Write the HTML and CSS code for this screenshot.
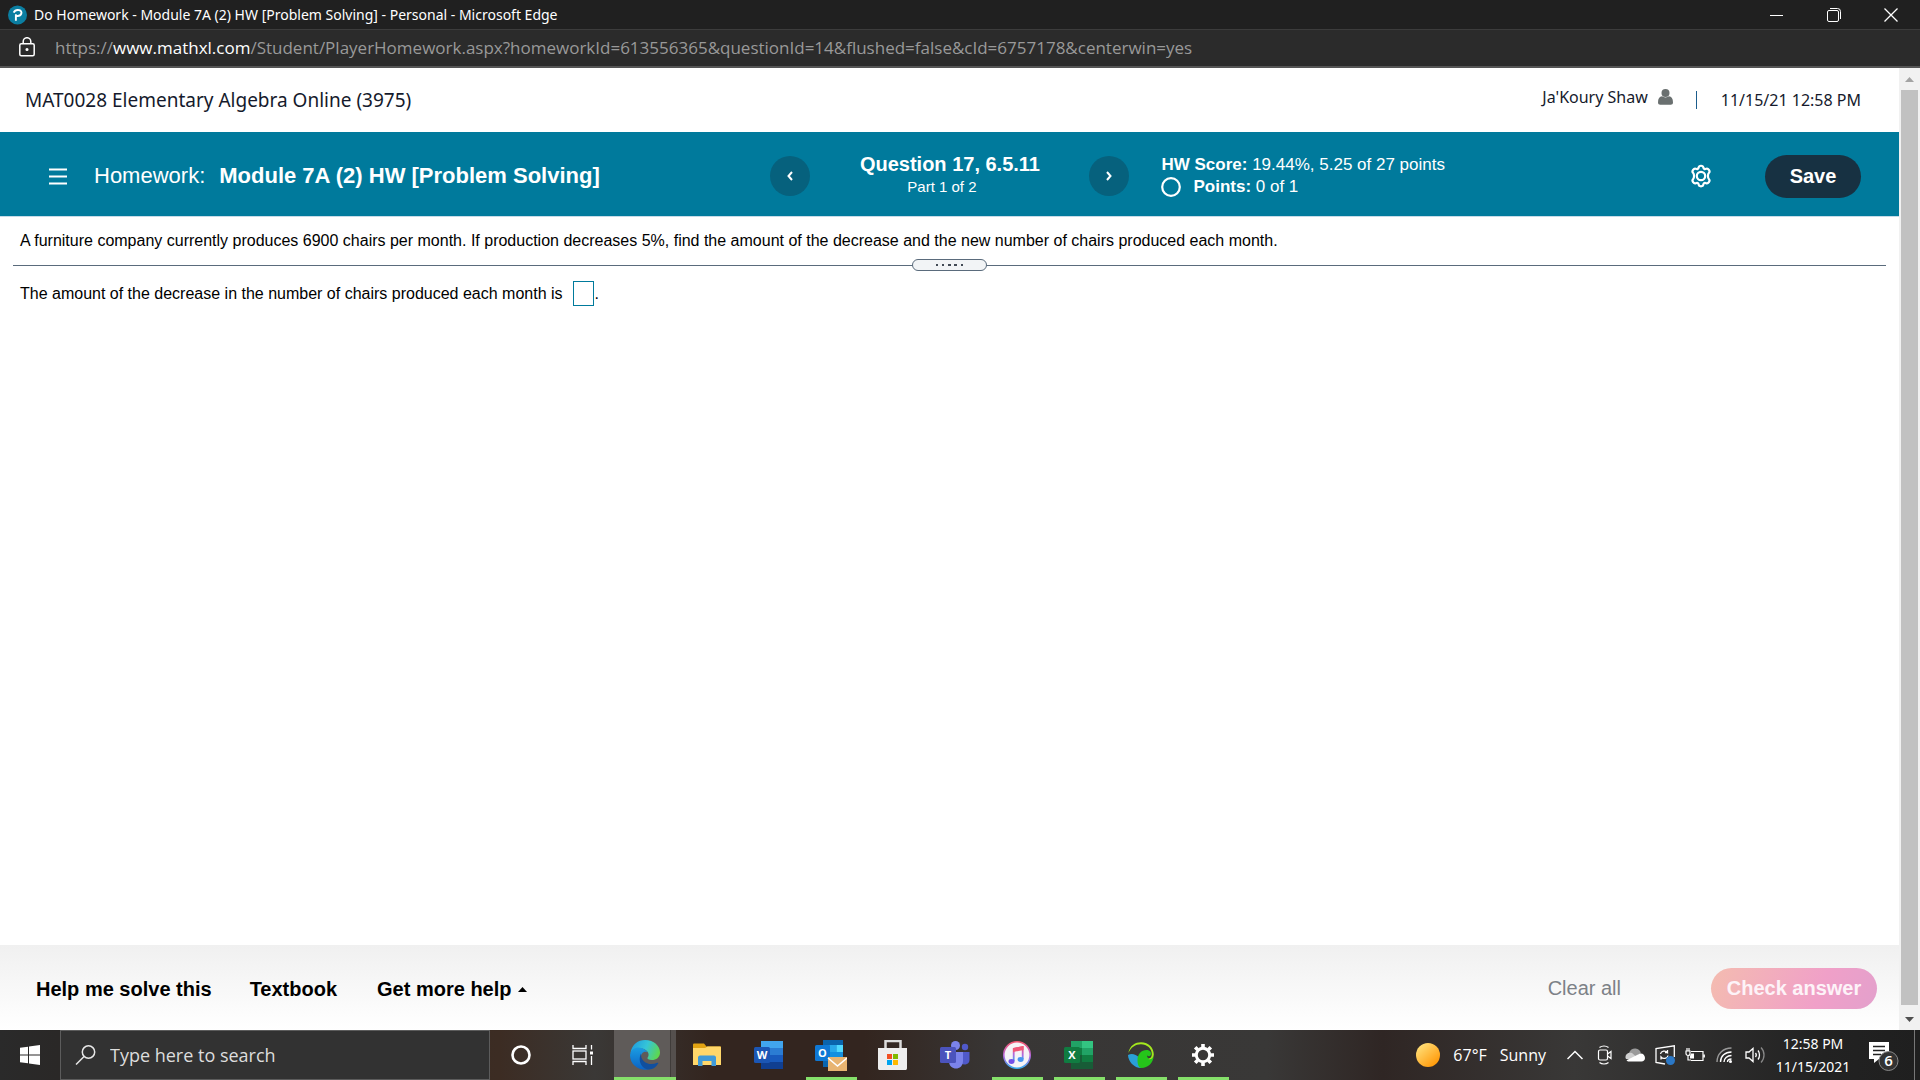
FILE: index.html
```html
<!DOCTYPE html>
<html lang="en">
<head>
<meta charset="utf-8">
<title>Do Homework - Module 7A (2) HW [Problem Solving]</title>
<link rel="stylesheet" href="styles.css">
</head>
<body>
<header class="titlebar">
  <svg class="favicon" viewBox="0 0 20 20" aria-hidden="true"><circle cx="10" cy="10" r="10" fill="#0b7ea1"/><path d="M8.3 16V9.2M6 7.6C7 5.4 9 4.6 11 4.8c2.600 0.200 3.600 2 3 3.800-.6 1.800-2.500 2.600-4.800 2.400" fill="none" stroke="#fff" stroke-width="2"/></svg>
  <span class="window-title">Do Homework - Module 7A (2) HW [Problem Solving] - Personal - Microsoft Edge</span>
  <div class="window-controls">
    <button class="win-btn" aria-label="Minimize"><svg width="14" height="14" viewBox="0 0 14 14"><path d="M0 7.500h13" stroke="#fff"/></svg></button>
    <button class="win-btn" aria-label="Restore"><svg width="14" height="14" viewBox="0 0 14 14" fill="none" stroke="#fff"><rect x=".5" y="2.500" width="11" height="11" rx="1.500"/><path d="M3 .5h7.500a3 3 0 0 1 3 3V11"/></svg></button>
    <button class="win-btn" aria-label="Close"><svg width="14" height="14" viewBox="0 0 14 14"><path d="M.5.5l13 13M13.500.5l-13 13" stroke="#fff" stroke-width="1.300"/></svg></button>
  </div>
</header>
<div class="urlbar">
  <svg class="lock" width="16" height="20" viewBox="0 0 16 20" fill="none" stroke="#fff" stroke-width="1.500"><rect x=".8" y="6.800" width="14.400" height="12" rx="1.500"/><path d="M4.200 6.500V4.500a3.800 3.800 0 0 1 7.600 0v2"/><circle cx="8" cy="12.500" r=".8" fill="#fff"/></svg>
  <span class="url">https://<b class="host">www.mathxl.com</b>/Student/PlayerHomework.aspx?homeworkId=613556365&amp;questionId=14&amp;flushed=false&amp;cId=6757178&amp;centerwin=yes</span>
</div>

<div class="viewport">
  <div class="page">
    <div class="course">
      <h1 class="course-name">MAT0028 Elementary Algebra Online (3975)</h1>
      <a class="user" href="#">Ja'Koury Shaw
        <svg width="15" height="16" viewBox="0 0 15 16" fill="#6a7070"><circle cx="7.500" cy="4" r="4"/><path d="M0 13.500C0 9.500 1.500 7.500 4 7.300c2 1.500 5 1.500 7 0 2.500.2 4 2.200 4 6.200 0 1.500-1 2.200-2.200 2.200H2.200C1 15.700 0 15 0 13.500z"/></svg>
      </a>
      <span class="sep"></span>
      <time class="stamp">11/15/21 12:58 PM</time>
    </div>

    <div class="bar">
      <div class="assignment">
        <button class="menu" aria-label="Menu"><svg width="18" height="17" viewBox="0 0 18 17"><path d="M0 1.500h18M0 8.500h18M0 15.500h18" stroke="#fff" stroke-width="2"/></svg></button>
        <span class="hw-label">Homework:</span>
        <h2 class="hw-name">Module 7A (2) HW [Problem Solving]</h2>
      </div>
      <nav class="question-nav">
        <button class="round" aria-label="Previous question"><svg width="8" height="10" viewBox="0 0 8 10"><path d="M6 1L2.500 5 6 9" fill="none" stroke="#fff" stroke-width="2"/></svg></button>
        <div class="question">
          <strong class="q-title">Question 17, 6.5.11</strong>
          <span class="q-part">Part 1 of 2</span>
        </div>
        <button class="round" aria-label="Next question"><svg width="8" height="10" viewBox="0 0 8 10"><path d="M2 1l3.500 4L2 9" fill="none" stroke="#fff" stroke-width="2"/></svg></button>
      </nav>
      <div class="score">
        <div><b>HW Score:</b> 19.44%, 5.25 of 27 points</div>
        <div class="points"><svg width="20" height="20" viewBox="0 0 20 20"><circle cx="10" cy="10" r="8.800" fill="none" stroke="#fff" stroke-width="2.200"/></svg><span><b>Points:</b> 0 of 1</span></div>
      </div>
      <button class="gear" aria-label="Settings"><svg width="22" height="24" viewBox="0 0 22 24" fill="none" stroke="#fff" stroke-width="2.200" stroke-linejoin="round"><path d="M8.700 3.300C9 1.200 13 1.200 13.300 3.300c.3 1.700 1.400 2.200 2.900 1.500 2-.9 4.300 2.600 2.800 4-1.400 1.300-1.400 5.100 0 6.400 1.500 1.400-.8 4.900-2.800 4-1.500-.7-2.600-.2-2.900 1.500-.3 2.100-4.300 2.100-4.600 0-.3-1.700-1.400-2.200-2.900-1.500-2 .9-4.300-2.600-2.800-4 1.400-1.300 1.400-5.100 0-6.400-1.500-1.400.8-4.900 2.800-4 1.500.7 2.600.2 2.900-1.500z"/><circle cx="11" cy="12" r="4.200"/></svg></button>
      <button class="save">Save</button>
    </div>

    <main class="work">
      <p class="problem">A furniture company currently produces 6900 chairs per month. If production decreases 5%, find the amount of the decrease and the new number of chairs produced each month.</p>
      <div class="divider"><button class="grip" aria-label="Resize panels"><svg width="28" height="3" viewBox="0 0 28 3" fill="#424a55"><path d="M0 0h2v2H0zM6 0h2v2H6zM12 0h3v2h-3zM18 0h3v2h-3zM25 0h2v2h-2z"/></svg></button></div>
      <p class="answer-line"><label for="answer">The amount of the decrease in the number of chairs produced each month is</label><input class="answer" id="answer" type="text"><span>.</span></p>
    </main>

    <footer class="help">
      <button class="link help-me">Help me solve this</button>
      <button class="link textbook">Textbook</button>
      <button class="link more">Get more help <svg width="9" height="5" viewBox="0 0 9 5"><path d="M0 5L4.500 0 9 5z"/></svg></button>
      <button class="clear">Clear all</button>
      <button class="check">Check answer</button>
    </footer>
  </div>
  <div class="scrollbar">
    <svg width="9" height="5" viewBox="0 0 9 5"><path d="M0 5L4.500 0 9 5z" fill="#a3a3a3"/></svg>
    <div class="thumb"></div>
    <svg width="9" height="5" viewBox="0 0 9 5"><path d="M0 0l4.500 5L9 0z" fill="#505050"/></svg>
  </div>
</div>

<div class="taskbar">
  <button class="start" aria-label="Start"><svg width="20" height="20" viewBox="0 0 20 20" fill="#fff"><path d="M0 2.800L8 1.700v7.800H0zM9 1.500L20 0v9.500H9zM0 10.500h8v7.800L0 17.200zM9 10.500h11V20L9 18.500z"/></svg></button>
  <div class="search">
    <svg width="22" height="20" viewBox="0 0 22 20" fill="none" stroke="#e8e8e8" stroke-width="1.500"><circle cx="13.500" cy="7" r="6.200"/><path d="M9 11.500L1 19.500"/></svg>
    <input class="search-box" type="text" aria-label="Search" placeholder="Type here to search">
  </div>
  <div class="apps">
    <button class="app" aria-label="Cortana"><svg width="20" height="20" viewBox="0 0 20 20"><circle cx="10" cy="10" r="8.500" fill="none" stroke="#fff" stroke-width="2.600"/></svg></button>
    <button class="app" aria-label="Task View"><svg width="22" height="20" viewBox="0 0 22 20" fill="none" stroke="#fff" stroke-width="1.300"><path d="M1 0v3.500h13V0M1 20v-3.500h13V20M19.500 0v4.500M19.500 11v9"/><rect x="1" y="6" width="13" height="8"/><path d="M18 8h3" stroke-width="3"/></svg></button>
    <button class="app active" aria-label="Microsoft Edge"><svg width="30" height="30" viewBox="0 0 30 30"><defs><linearGradient id="eg" x1="0" y1=".3" x2="1" y2=".6"><stop offset="0" stop-color="#1e9de0"/><stop offset=".5" stop-color="#35c5d8"/><stop offset="1" stop-color="#5fd84a"/></linearGradient><linearGradient id="eb" x1="0" y1="0" x2="0" y2="1"><stop offset="0" stop-color="#1b9de2"/><stop offset="1" stop-color="#0b62c4"/></linearGradient></defs><path d="M.5 13C2 4 8 0 15 0c9 0 15 6 15 12.500 0 5-4 7.500-8 7.500-3.500 0-5-1.300-4.500-2.300 1.300-1.500 1.500-3.700.3-5.700C14.500 7 5 6.500.5 13z" fill="url(#eg)"/><path d="M0 15C1 8 7 6.500 11.500 8c3 1 5.200 2.700 6 4.500-3-2-6.500.5-6.500 4.500 0 7 5 12 9 12.100C11 32 0 26 0 15z" fill="url(#eb)"/><path d="M11 13.500C7 22 13 29.500 19 29.500c4 0 7.500-3 9.200-6 .3-.8-.4-1-1-.7-8 3.700-16.700-.8-16.200-9.300z" fill="#104f9e"/></svg></button>
    <button class="app" aria-label="File Explorer"><svg width="28" height="24" viewBox="0 0 28 24"><path d="M0 2C0 .8.500.5 1.500.5H11l2.500 3H28V8H0z" fill="#e2a312"/><path d="M0 5h12l2.500-1.500H26.500c1 0 1.500.5 1.500 1.500v17H0z" fill="#ffd76a"/><path d="M5 23V14.500c0-1 .8-2 2-2h14c1.200 0 2 1 2 2V23h-4.500v-5h-9v5z" fill="#3f9ad8"/></svg></button>
    <button class="app" aria-label="Word"><svg width="30" height="28" viewBox="0 0 30 28"><path d="M7 0h22v7H7z" fill="#41a5ee"/><path d="M7 7h22v7H7z" fill="#2b7cd3"/><path d="M7 14h22v7H7z" fill="#185abd"/><path d="M7 21h22v7H7z" fill="#103f91"/><rect y="6" width="16" height="16" rx="1.500" fill="#1b56b4"/><text class="glyph" x="8" y="18">W</text></svg></button>
    <button class="app running" aria-label="Outlook"><svg width="32" height="32" viewBox="0 0 32 32"><path d="M8 1h20v27H8z" fill="#0a64ad"/><path d="M8 6h7v7H8z" fill="#1490df"/><path d="M15 6h6.500v7H15z" fill="#28a8ea"/><path d="M21.500 6H28v7h-6.500z" fill="#50d9ff"/><path d="M15 13h13v7H15z" fill="#1490df"/><rect y="6" width="15" height="16" rx="1.500" fill="#0f78d4"/><text class="glyph" x="7.500" y="18">O</text><path d="M13 18h19v14H13z" fill="#e8b471"/><path d="M13 19l9.500 8 9.500-8" fill="none" stroke="#fff" stroke-width="1.600"/></svg></button>
    <button class="app" aria-label="Microsoft Store"><svg width="30" height="30" viewBox="0 0 30 30"><path d="M7.500 9V1h15v8" fill="none" stroke="#ddd" stroke-width="2.500"/><path d="M0 8h29v20c0 1.500-.5 2-2 2H2c-1.500 0-2-.5-2-2z" fill="#eee"/><path d="M9 14h5v5H9z" fill="#f25022"/><path d="M15 14h5v5h-5z" fill="#7fba00"/><path d="M9 20h5v5H9z" fill="#00a4ef"/><path d="M15 20h5v5h-5z" fill="#ffb900"/></svg></button>
    <button class="app" aria-label="Teams"><svg width="30" height="28" viewBox="0 0 30 28"><circle cx="25" cy="6" r="3.200" fill="#5059c9"/><path d="M20 11h9.500v8c0 3-2.500 4.500-5 4.500s-4.500-2-4.500-4z" fill="#5059c9"/><circle cx="15.500" cy="4.500" r="4.500" fill="#7b83eb"/><path d="M9 11h14v9c0 5-3.500 7.500-7 7.500s-7-2.500-7-7z" fill="#7b83eb"/><rect y="6" width="16" height="16" rx="1.500" fill="#4b53bc"/><text class="glyph" x="8" y="18">T</text></svg></button>
    <button class="app running" aria-label="iTunes"><svg width="28" height="28" viewBox="0 0 28 28"><defs><linearGradient id="it" x1="0" y1="0" x2="0" y2="1"><stop offset="0" stop-color="#f55770"/><stop offset=".55" stop-color="#b268e0"/><stop offset="1" stop-color="#38aef0"/></linearGradient></defs><circle cx="14" cy="14" r="13.200" fill="#f5f3f6" stroke="url(#it)" stroke-width="1.600"/><path d="M10.700 20V8l9-2v12" fill="none" stroke="url(#it)" stroke-width="1.800"/><path d="M10 7l10.500-2v4L10 11z" fill="#f05878"/><ellipse cx="8.500" cy="20.500" rx="3" ry="2.400" fill="#7450e8"/><ellipse cx="17.600" cy="18.500" rx="3" ry="2.400" fill="#4894f0"/></svg></button>
    <button class="app running" aria-label="Excel"><svg width="30" height="28" viewBox="0 0 30 28"><path d="M7 0h11v7H7z" fill="#21a366"/><path d="M18 0h11v7H18z" fill="#33c481"/><path d="M7 7h11v7H7z" fill="#107c41"/><path d="M18 7h11v7H18z" fill="#21a366"/><path d="M7 14h11v7H7z" fill="#185c37"/><path d="M18 14h11v7H18z" fill="#107c41"/><path d="M7 21h22v7H7z" fill="#185c37"/><rect y="6" width="16" height="16" rx="1.500" fill="#107c41"/><text class="glyph" x="8" y="18">X</text></svg></button>
    <button class="app running" aria-label="Webroot"><svg width="28" height="28" viewBox="0 0 28 28"><path d="M1 14c4-2 8-.5 11 2.500l2 10.500C7 27 1.200 20.500 1 14z" fill="#2a9fd8"/><path d="M10.500 19c0-6 4-10 9-10 3.500 0 5 2.500 4.500 4.500-.6 2-3 2.300-3.800.8-.7 3.500 3.300 4.500 6.500 1.200C26 22 21 27 14.500 27c-3 0-4-4-4-8z" fill="#25c51a"/><path d="M1.300 12C3 4 8.500 1.200 14 1.200c8 0 12.800 5.800 12.800 12.300 0 3.500-3 5.500-5.500 4.500 2.500-.8 3.500-2.500 3.500-5C24.800 7.500 20 3.500 14 3.300 8.500 3.200 4.500 6 1.300 12z" fill="#a4e81e"/></svg></button>
    <button class="app running" aria-label="Settings"><svg width="24" height="24" viewBox="0 0 24 24" fill="none" stroke="#fff"><circle cx="12" cy="12" r="6.700" stroke-width="3"/><path d="M12 1v3.500M12 19.500V23M1 12h3.500M19.500 12H23M4.200 4.200l2.500 2.500M17.300 17.300l2.500 2.500M19.800 4.200l-2.500 2.500M6.700 17.300l-2.500 2.500" stroke-width="3.600"/></svg></button>
  </div>
  <div class="tray">
    <button class="weather"><svg width="24" height="24" viewBox="0 0 24 24"><defs><linearGradient id="sun" x1=".1" y1=".1" x2=".8" y2=".9"><stop offset="0" stop-color="#ffe07a"/><stop offset="1" stop-color="#ff9a0a"/></linearGradient></defs><circle cx="12" cy="12" r="12" fill="url(#sun)"/></svg><span>67°F</span><span>Sunny</span></button>
    <button class="tray-icon" aria-label="Show hidden icons"><svg width="16" height="10" viewBox="0 0 16 10"><path d="M.5 9L8 1.500 15.500 9" fill="none" stroke="#fff" stroke-width="1.500"/></svg></button>
    <button class="tray-icon" aria-label="Meet Now"><svg width="16" height="20" viewBox="0 0 16 20" fill="none" stroke="#fff" stroke-width="1.200"><rect x="1.500" y="5" width="9" height="10" rx="1.500"/><path d="M10.500 9L14 6.500v7L10.500 11M2.500 2.500c2.500-2 6.500-2 9 0M2.500 17.500c2.500 2 6.500 2 9 0"/></svg></button>
    <button class="tray-icon" aria-label="OneDrive"><svg width="20" height="14" viewBox="0 0 20 14"><path d="M4 5C5 1.500 8 .3 10.500.5c3 .3 4.800 2 5.300 4.500L10 9z" fill="#9b9b9b"/><path d="M1 11C-1 7 3 3.500 7 5l8 7z" fill="#cfcfcf"/><path d="M1.500 12.200L14 6c3-1.500 6 1 6 4 0 2-1.500 3.500-3.500 3.500H4c-1 0-2-.5-2.500-1.300z" fill="#fff"/></svg></button>
    <button class="tray-icon" aria-label="Sync"><svg width="20" height="20" viewBox="0 0 20 20" fill="none" stroke="#fff" stroke-width="1.300"><path d="M10 19L1 17.500v-14L19.300.8V12M5.500 9c.5-3 5-4 7-1.500V5M12.500 7.500H10M13 10.500c-.5 3-5 4-7 1.500v2.500"/><circle cx="15.500" cy="15.500" r="4.500" fill="#2b78c6" stroke="none"/></svg></button>
    <button class="tray-icon" aria-label="Battery"><svg width="20" height="14" viewBox="0 0 20 14" fill="none" stroke="#fff" stroke-width="1.200"><path d="M6 3.500h12v9H6M19.300 6.500v3M1 3h4v2.500a2 2 0 0 1-4 0zM2 3V0M4 3V0M3 7.500V12h3"/><path d="M6 5.500h3v5H5V8z" fill="#fff" stroke="none"/></svg></button>
    <button class="tray-icon" aria-label="Network"><svg width="18" height="18" viewBox="0 0 18 18" fill="none" stroke="#fff" stroke-width="1.400"><path d="M1 16C1 8 7 2 15.500 2" stroke="#999"/><path d="M4.500 16c0-6 4.500-10 11-10M8 16c0-3.500 3-6.500 7.500-6.500M11.500 16c0-2 1.500-3 4-3"/><circle cx="14.500" cy="15.500" r="1.500" fill="#fff" stroke="none"/></svg></button>
    <button class="tray-icon" aria-label="Volume"><svg width="20" height="18" viewBox="0 0 20 18" fill="none" stroke="#fff" stroke-width="1.300"><path d="M1 6h3l4-3.500v13L4 12H1zM10.500 7c.8 1 .8 3 0 4M13 4.500c2 2.500 2 6.500 0 9"/><path d="M16 1.500c4 4 4 11 0 15" stroke="#888"/></svg></button>
    <button class="clock"><span>12:58 PM</span><span>11/15/2021</span></button>
    <button class="notice" aria-label="Notifications"><svg width="30" height="32" viewBox="0 0 30 32"><path d="M0 3h20v17H10l-5 4v-4H0z" fill="#fff"/><path d="M4 7.500h12M4 11.500h12M4 15.500h8" stroke="#222" stroke-width="1.400"/><circle cx="19.500" cy="22" r="9.500" fill="#333" stroke="#888"/><text class="badge" x="19.500" y="27">6</text></svg></button>
    <button class="show-desktop" aria-label="Show desktop"></button>
  </div>
</div>
</body>
</html>
```
FILE: styles.css
```css
* { box-sizing: border-box; }

body {
  margin: 0;
  min-height: 100vh;
  display: flex;
  flex-direction: column;
  font-family: "Liberation Sans", Arial, sans-serif;
  background: #fff;
  color: #000;
}

button, input {
  font: inherit;
  color: inherit;
  padding: 0;
  border: 0;
  background: none;
}

h1, h2, p { margin: 0; }
svg { display: block; flex: none; }

.titlebar {
  display: flex;
  align-items: center;
  gap: 7px;
  height: 30px;
  padding: 0 1px 0 8px;
  background: #202020;
  border-bottom: 1px solid #3c3c3c;
  color: #fff;
  font-family: "Noto Sans", sans-serif;
  font-size: 14px;
}
.favicon { width: 19px; height: 20px; }
.window-title { flex: 1; }
.window-controls { display: flex; }
.win-btn {
  display: grid;
  place-items: center;
  width: 57px;
  height: 29px;
}

.urlbar {
  display: flex;
  align-items: center;
  gap: 20px;
  height: 38px;
  padding: 0 20px 2px 19px;
  background: #2b2b2b;
  border-bottom: 2px solid #555;
  color: #999;
  font-family: "Open Sans", sans-serif;
  font-size: 17px;
}
.host { font-weight: 400; color: #fff; }

.viewport { flex: 1; display: flex; }
.page { flex: 1; display: flex; flex-direction: column; min-width: 0; }

.scrollbar {
  display: flex;
  flex-direction: column;
  align-items: center;
  gap: 8px;
  width: 21px;
  padding: 9px 0 8px;
  background: #f1f1f1;
}
.scrollbar .thumb { flex: 1; width: 17px; background: #c1c1c1; }
.scrollbar .thumb + svg { margin-top: 4px; }

.course {
  display: flex;
  align-items: center;
  height: 64px;
  padding: 0 38px 0 25px;
  color: #151a2c;
  font-family: "Noto Sans", sans-serif;
  font-size: 16px;
}
.course-name { flex: 1; font-size: 19px; font-weight: 400; }
.user {
  display: flex;
  align-items: center;
  gap: 10px;
  padding-bottom: 6px;
  color: inherit;
  text-decoration: none;
}
.sep { width: 1px; height: 18px; margin: 0 24px 0 23px; background: #1c5d8c; }

.bar {
  display: flex;
  align-items: center;
  height: 85px;
  padding: 4px 38px 0 0;
  background: #007a9c;
  border-bottom: 1px solid #c5dbe8;
  color: #fff;
}
.assignment {
  display: flex;
  align-items: center;
  flex: none;
  width: 41.4%;
  padding-left: 49px;
  font-size: 22px;
}
.hw-label { margin: 0 14px 0 27px; }
.hw-name { font-size: 22px; }
.question-nav { display: flex; flex: none; align-items: center; justify-content: space-between; width: 359px; }
.round {
  display: grid;
  place-items: center;
  width: 40px;
  height: 40px;
  border-radius: 50%;
  background: #06617d;
}
.question { display: flex; flex-direction: column; align-items: center; padding-bottom: 2px; }
.q-title { font-size: 20px; line-height: 24px; }
.q-part { padding-right: 16px; font-size: 15px; line-height: 22px; }
.score {
  flex: 1;
  padding-left: 32px;
  font-size: 17px;
  line-height: 22px;
}
.points { display: flex; align-items: center; gap: 12px; }
.gear { margin-right: 53px; }
.save {
  width: 96px;
  height: 43px;
  border-radius: 22px;
  background: #173142;
  font-size: 20px;
  font-weight: 700;
}

.work { flex: 1; padding: 13px 13px 0; font-size: 16px; }
.problem { padding-left: 7px; line-height: 22px; }
.divider {
  display: flex;
  justify-content: center;
  align-items: center;
  height: 12px;
  margin-top: 7px;
  background: linear-gradient(#5a6b7c, #5a6b7c) center / 100% 1px no-repeat;
}
.grip {
  display: grid;
  place-items: center;
  width: 75px;
  height: 12px;
  border: 1px solid #5a6b7c;
  border-radius: 6px;
  background: #f2f4f6;
}
.answer-line { display: flex; align-items: center; margin-top: 10px; padding-left: 7px; }
.answer { width: 21px; height: 25px; margin: 0 1px 0 10px; border: 1px solid #007a9c; background: #fff; }

.help {
  display: flex;
  align-items: center;
  height: 85px;
  padding: 3px 22px 0 36px;
  background: linear-gradient(#f0f0f0, #fff);
  font-size: 20px;
}
.link { font-weight: 700; }
.textbook { margin: 0 40px 0 38px; }
.more { display: flex; align-items: center; gap: 6px; }
.clear, .check { margin-bottom: 2px; }
.clear { margin-left: auto; margin-right: 90px; color: #7d8187; }
.check {
  width: 166px;
  height: 41px;
  border-radius: 21px;
  background: linear-gradient(110deg, #f4bcb0, #f0a0c8 65%, #e3a0cc);
  color: #fdf3f8;
  font-weight: 700;
}

.taskbar {
  display: flex;
  height: 50px;
  background: linear-gradient(90deg, #2a2a2a, #2a2827 3%, #3c2c23 26%, #3a3836 31%, #33251f 37%, #33251f 45%, #383635 52%, #393837 66%, #2f2624 72%, #393837 82%, #222 95%, #1f1f1f);
  color: #fff;
  font-family: "Open Sans", sans-serif;
  font-size: 16px;
}
.start { display: grid; place-items: center; width: 60px; }
.search {
  display: flex;
  align-items: center;
  gap: 13px;
  width: 430px;
  padding-left: 14px;
  border: 1px solid #5c5c5c;
  background: #323232;
}
.search-box { flex: 1; font-size: 18px; }
.search-box::placeholder { color: #ddd; opacity: 1; }
.apps { display: flex; flex: 1; }
.app { display: grid; place-items: center; width: 62px; height: 50px; }
.running { background: linear-gradient(#85e06a, #85e06a) center bottom / 51px 3px no-repeat; }
.active {
  border-bottom: 3px solid #85e06a;
  background: linear-gradient(90deg, #5f5b59 56px, #403c3a 56px, #403c3a 57px, #55504e 57px);
}
.active svg { margin-top: 3px; }
.glyph { fill: #fff; font: 700 11px "Open Sans", sans-serif; text-anchor: middle; }

.tray { display: flex; align-items: center; gap: 10px; }
.tray-icon { display: grid; place-items: center; width: 20px; }
.weather { display: flex; align-items: center; gap: 13px; margin-right: 9px; white-space: nowrap; }
.clock {
  display: flex;
  flex-direction: column;
  align-items: center;
  min-width: 76px;
  font-family: "Noto Sans", sans-serif;
  font-size: 14px;
  line-height: 23px;
}
.notice { margin-left: 8px; }
.badge { fill: #fff; font: 600 15px "Open Sans", sans-serif; text-anchor: middle; }
.show-desktop { align-self: stretch; width: 6px; margin-left: 5px; border-left: 1px solid #777; }
```
